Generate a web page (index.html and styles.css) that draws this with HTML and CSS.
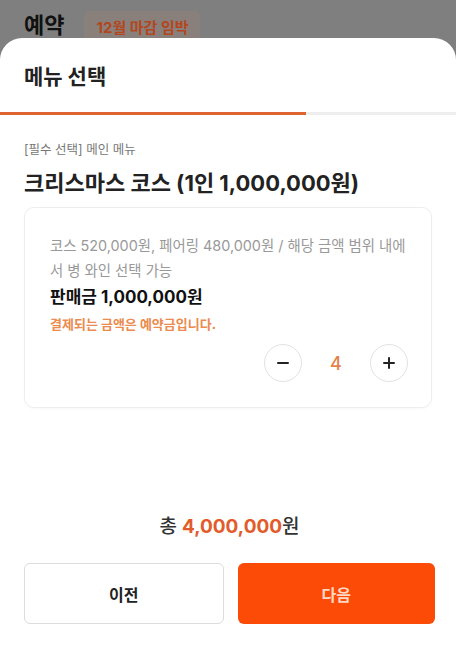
FILE: index.html
```html
<!DOCTYPE html>
<html lang="ko">

<head>
    <meta charset="UTF-8" />
    <meta name="viewport" content="width=device-width, initial-scale=1.0" />
    <title>예약</title>
    <link rel="stylesheet" href="styles.css">
</head>

<body>
    <div class="page-head">
        <h1>예약</h1>
        <span class="badge">12월 마감 임박</span>
    </div>

    <div class="sheet">
        <h2 class="sheet-title">메뉴 선택</h2>
        <div class="progress"><div class="progress-bar"></div></div>

        <div class="content">
            <p class="label">[필수 선택] 메인 메뉴</p>
            <h3 class="menu-name">크리스마스 코스 (1인 1,000,000원)</h3>

            <div class="card">
                <p class="desc">코스 520,000원, 페어링 480,000원 / 해당 금액 범위 내에서 병 와인 선택 가능</p>
                <p class="price">판매금 1,000,000원</p>
                <p class="notice">결제되는 금액은 예약금입니다.</p>
                <div class="stepper">
                    <a class="step-btn" href="javascript:;">
                        <svg width="14" height="14" viewBox="0 0 14 14"><path d="M2 7h10" stroke="#222" stroke-width="2" stroke-linecap="round"/></svg>
                    </a>
                    <span class="count">4</span>
                    <a class="step-btn" href="javascript:;">
                        <svg width="14" height="14" viewBox="0 0 14 14"><path d="M2 7h10M7 2v10" stroke="#222" stroke-width="2" stroke-linecap="round"/></svg>
                    </a>
                </div>
            </div>
        </div>

        <div class="footer">
            <p class="total">총 <strong>4,000,000</strong>원</p>
            <div class="buttons">
                <a class="btn btn-prev" href="javascript:;">이전</a>
                <a class="btn btn-next" href="javascript:;">다음</a>
            </div>
        </div>
    </div>
</body>

</html>
```

FILE: styles.css
```css
* {
    margin: 0;
    padding: 0;
    box-sizing: border-box;
}

body {
    width: 456px;
    height: 645px;
    overflow: hidden;
    background-color: #7f7f7f;
    font-family: Inter, "Noto Sans CJK KR", sans-serif;
    color: #222;
    display: flex;
    flex-direction: column;
}

a {
    text-decoration: none;
    color: inherit;
}

/* 
    뒤에 가려진 헤더
*/
.page-head {
    height: 38px;
    display: flex;
    align-items: flex-end;
    gap: 20px;
    padding: 0 24px;
}

.page-head h1 {
    font-size: 22px;
    font-weight: 700;
    color: #111;
    line-height: 30px;
    margin-bottom: -2px;
}

.badge {
    height: 27px;
    padding: 5px 11px 0 12px;
    border-radius: 6px 6px 0 0;
    background-color: #8a807b;
    color: #b3461d;
    font-size: 15px;
    font-weight: 700;
    line-height: 24px;
}

/* 
    바텀시트
*/
.sheet {
    flex: 1;
    background-color: #fff;
    border-radius: 22px 22px 0 0;
    display: flex;
    flex-direction: column;
}

.sheet-title {
    font-size: 21px;
    font-weight: 700;
    color: #222;
    padding: 24px 24px 0;
    line-height: 30px;
}

.progress {
    margin-top: 20px;
    height: 3px;
    background-color: #eee;
}

.progress-bar {
    width: 306px;
    height: 3px;
    background-color: #de6430;
}

.content {
    padding: 26px 24px 0;
}

.label {
    font-size: 12.5px;
    color: #777;
    line-height: 18px;
}

.menu-name {
    font-size: 22px;
    font-weight: 700;
    color: #222;
    line-height: 30px;
    margin-top: 9px;
}

.card {
    margin-top: 9px;
    height: 201px;
    border: 1px solid #ededed;
    border-radius: 10px;
    padding: 25px 25px 0 25px;
    box-shadow: 0 1px 3px rgba(0, 0, 0, 0.03);
}

.desc {
    font-size: 14.4px;
    color: #999;
    line-height: 25px;
}

.price {
    font-size: 17px;
    font-weight: 700;
    color: #111;
    line-height: 24px;
    margin-top: 2px;
}

.notice {
    font-size: 13px;
    font-weight: 700;
    color: #eb8b4f;
    line-height: 20px;
    margin-top: 5px;
}

.stepper {
    display: flex;
    justify-content: flex-end;
    align-items: center;
    margin-top: 10px;
    margin-right: -2px;
}

.step-btn {
    width: 38px;
    height: 38px;
    border: 1.5px solid #e2e2e2;
    border-radius: 50%;
    display: flex;
    justify-content: center;
    align-items: center;
}

.count {
    width: 68px;
    text-align: center;
    font-size: 18px;
    font-weight: 500;
    color: #e4824a;
}

/* 
    하단 영역
*/
.footer {
    margin-top: auto;
    padding: 0 21px 21px 24px;
}

.total {
    text-align: center;
    font-size: 19px;
    font-weight: 500;
    color: #333;
    line-height: 26px;
    transform: translateY(2px);
}

.total strong {
    color: #e35b2a;
    font-weight: 700;
}

.buttons {
    display: flex;
    gap: 14px;
    margin-top: 25px;
}

.btn {
    flex: 1;
    height: 61px;
    border-radius: 6px;
    display: flex;
    justify-content: center;
    align-items: center;
    font-size: 16px;
    font-weight: 700;
}

.btn-prev {
    border: 1px solid #dcdcdc;
    color: #222;
}

.btn-next {
    background-color: #fc4a07;
    color: #ffd9c4;
}
```
